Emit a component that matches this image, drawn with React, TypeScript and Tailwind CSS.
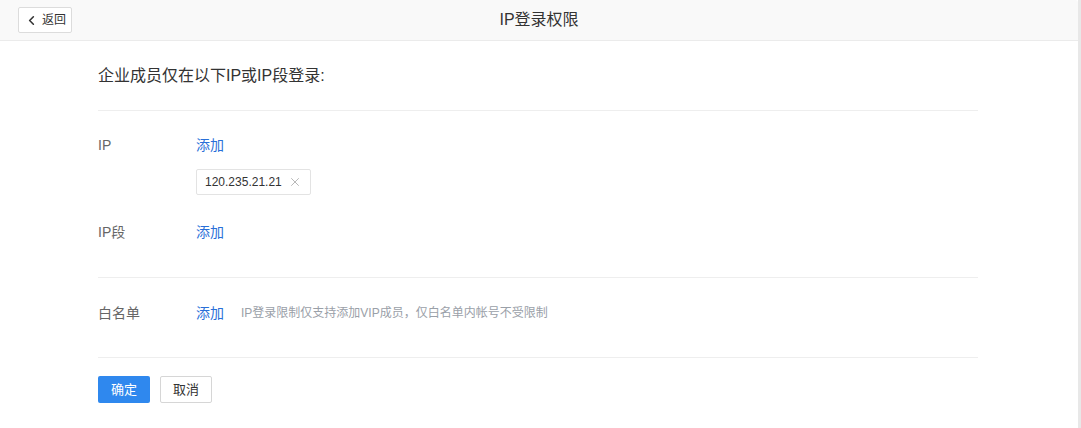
import { ChevronLeft, X } from "lucide-react";

const font = "font-['Liberation_Sans','Noto_Sans_CJK_SC',sans-serif]";

const Row = ({ label, children }: { label: string; children: React.ReactNode }) => (
    <div className="flex items-start">
        <div className="w-[98px] text-[14px] leading-[20px] text-[#666]">{label}</div>
        <div className="flex flex-1 flex-col items-start">{children}</div>
    </div>
);

const AddLink = () => (
    <span className="block text-[14px] leading-[20px] text-[#2a6fd8] cursor-pointer">添加</span>
);

export default function App() {
    return (
        <div className={`${font} flex h-[428px] w-[1081px] bg-[#e8e8e8]`}>
            <div className="flex w-[1078px] flex-col bg-white">
                <header className="relative flex h-[41px] shrink-0 items-center justify-center border-b border-[#ebebeb] bg-[#f9f9f9] rounded-tr-[3px]">
                    <button className="absolute left-[18px] top-[7px] flex h-[26px] w-[54px] items-center justify-center rounded-[2px] border border-[#dcdcdc] bg-white text-[12px] text-[#333]">
                        <ChevronLeft className="mr-[3px] h-[15px] w-[15px]" strokeWidth={2.5} />
                        返回
                    </button>
                    <h1 className="text-[16px] text-[#333]">IP登录权限</h1>
                </header>

                <main className="w-[880px] ml-[98px]">
                    <div className="pt-[24px] pb-[23px] text-[16px] leading-[22px] text-[#333]">
                        企业成员仅在以下IP或IP段登录:
                    </div>
                    <div className="border-t border-[#eeeeee]" />

                    <div className="flex flex-col pt-[24px] pb-[35px]">
                        <Row label="IP">
                            <AddLink />
                            <div className="mt-[14px] inline-flex h-[26px] items-center gap-[6px] rounded-[2px] border border-[#e3e3e3] pl-[8px] pr-[8px] text-[12px] text-[#333]">
                                120.235.21.21
                                <X className="h-[14px] w-[14px] text-[#999]" strokeWidth={1.2} />
                            </div>
                        </Row>
                        <div className="mt-[27px]">
                            <Row label="IP段">
                                <AddLink />
                            </Row>
                        </div>
                    </div>
                    <div className="border-t border-[#eeeeee]" />

                    <div className="pt-[25px] pb-[34px]">
                        <Row label="白名单">
                            <div className="flex items-center gap-[17px]">
                                <AddLink />
                                <span className="text-[12px] text-[#9aa0a8]">
                                    IP登录限制仅支持添加VIP成员，仅白名单内帐号不受限制
                                </span>
                            </div>
                        </Row>
                    </div>
                    <div className="border-t border-[#eeeeee]" />

                    <div className="flex gap-[10px] pt-[18px]">
                        <button className="h-[27px] w-[52px] rounded-[2px] bg-[#2f88ee] text-[13px] text-white">
                            确定
                        </button>
                        <button className="h-[27px] w-[52px] rounded-[2px] border border-[#d6d6d6] bg-white text-[13px] text-[#333]">
                            取消
                        </button>
                    </div>
                </main>
            </div>
        </div>
    );
}
